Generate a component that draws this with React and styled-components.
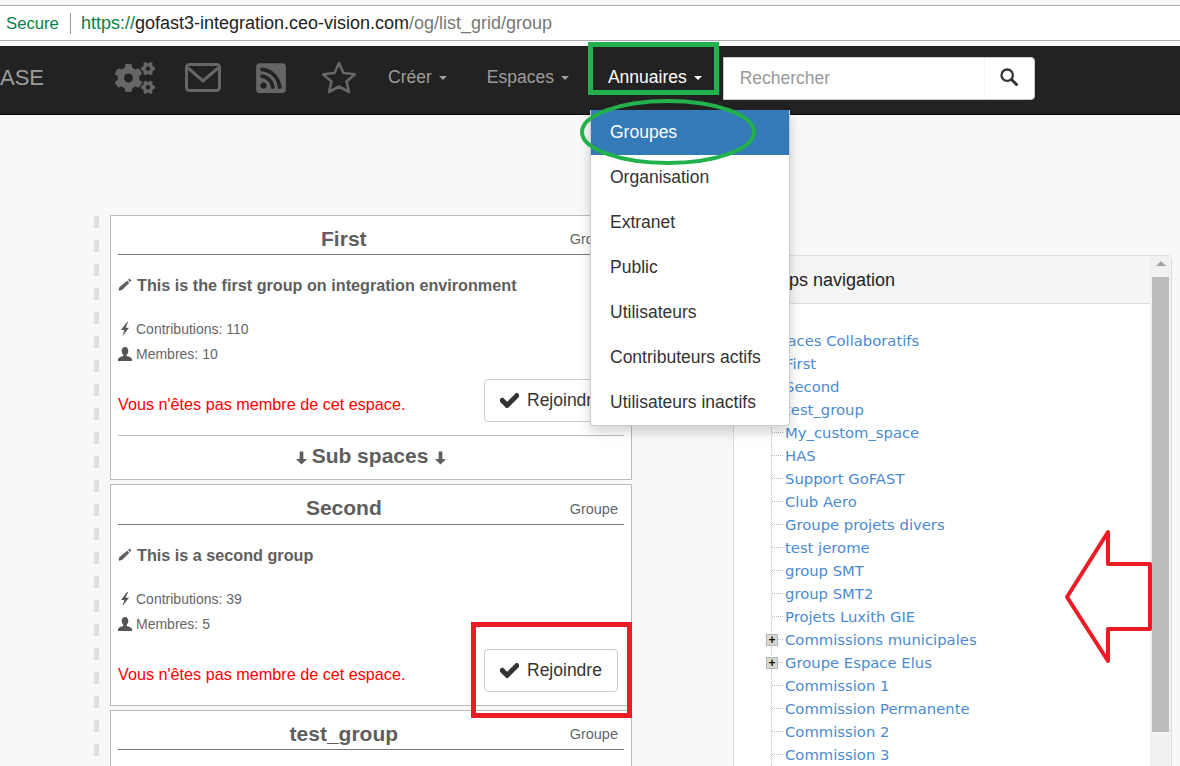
import React from 'react';
import styled, { createGlobalStyle } from 'styled-components';
import { FaCogs, FaRssSquare, FaCheck } from 'react-icons/fa';

const GlobalStyle = createGlobalStyle`
    html, body {
        margin: 0;
        height: 766px;
        overflow: hidden;
        background: #f8f8f8;
        font-family: 'Liberation Sans', Arial, sans-serif;
    }
    * { box-sizing: border-box; }
`;

const Page = styled.div`
    position: relative;
    width: 1180px;
    height: 766px;
    overflow: hidden;
`;

const AddressBar = styled.div`
    margin-top: 5px;
    height: 36px;
    background: #fff;
    border-top: 1px solid #aaa;
    border-bottom: 1px solid #aaa;
    display: flex;
    align-items: center;
    padding-left: 6px;
    font-size: 18px;
    color: #222;
`;

const Secure = styled.span`
    color: #0b8043;
    font-size: 16.7px;
    padding-right: 11px;
    border-right: 1px solid #999;
    line-height: 21px;
    margin-right: 10px;
`;

const Scheme = styled.span` color: #0b8043; `;
const Path = styled.span` color: #777; `;

const NavBar = styled.nav`
    margin-top: 5px;
    height: 69px;
    padding-bottom: 5px;
    background: #222;
    border-bottom: 1px solid #080808;
    display: flex;
    align-items: center;
    color: #9d9d9d;
    font-size: 17.5px;
`;

const Brand = styled.span`
    font-size: 22px;
    width: 115px;
`;

const IconLink = styled.span`
    display: flex;
    width: ${p => p.$width}px;
    color: #666;
    font-size: ${p => p.$size}px;
`;

const MenuItem = styled.span`
    position: relative;
    display: flex;
    align-items: center;
    margin-right: ${p => p.$gap}px;
    color: ${p => (p.$active ? '#fff' : '#9d9d9d')};
`;

const Caret = styled.i`
    margin-left: 7px;
    border-top: 4px solid currentColor;
    border-left: 4px solid transparent;
    border-right: 4px solid transparent;
`;

const SearchBox = styled.div`
    width: 312px;
    height: 43px;
    margin-top: 2px;
    display: flex;
    background: #fff;
    border: 1px solid #ccc;
    border-radius: 0 4px 4px 0;
    color: #999;
`;

const SearchInput = styled.div`
    flex: 1;
    display: flex;
    align-items: center;
    padding-left: 16px;
`;

const SearchButton = styled.div`
    width: 50px;
    display: flex;
    align-items: center;
    justify-content: center;
    border-left: 1px solid #f4f4f4;
    color: #333;
    padding-bottom: 3px;
`;

const Dropdown = styled.ul`
    position: absolute;
    left: 590px;
    top: 110px;
    width: 200px;
    height: 316px;
    margin: 0;
    padding: 0;
    list-style: none;
    background: #fff;
    border: 1px solid #ccc;
    border-top: none;
    border-radius: 0 0 4px 4px;
    box-shadow: 0 6px 12px rgba(0, 0, 0, 0.175);
    font-size: 17.5px;
    color: #333;
    z-index: 3;
`;

const DropdownItem = styled.li`
    height: 45px;
    padding-left: 19px;
    display: flex;
    align-items: center;
    background: ${p => (p.$active ? '#337ab7' : 'transparent')};
    color: ${p => (p.$active ? '#fff' : '#333')};
`;

const Main = styled.main`
    display: flex;
    align-items: flex-start;
    margin-top: 100px;
    padding-left: 94px;
`;

const DashedRail = styled.div`
    width: 5px;
    height: 560px;
    margin-top: 1px;
    margin-right: 11px;
    background: repeating-linear-gradient(#e0e0e0 0 12px, transparent 12px 24px);
`;

const CardColumn = styled.div`
    width: 522px;
    display: flex;
    flex-direction: column;
    gap: 4px;
    margin-right: 101px;
`;

const Card = styled.article`
    height: ${p => p.$height}px;
    background: #fff;
    border: 1px solid #bbb;
    padding: 0 7px;
    color: #5e5e5e;
`;

const CardHeader = styled.header`
    height: ${p => p.$height}px;
    display: flex;
    align-items: center;
    border-bottom: 1px solid #777;
    padding: 8px 6px 0 0;
`;

const CardTitle = styled.h2`
    flex: 1;
    margin: 0;
    padding-top: 7px;
    padding-bottom: 8px;
    text-align: center;
    font-size: 21px;
    font-weight: bold;
`;

const GroupTag = styled.span`
    font-size: 14.5px;
    color: #666;
`;

const Description = styled.p`
    margin: 19px 0 0;
    height: 22px;
    display: flex;
    align-items: center;
    gap: 5px;
    font-size: 16.2px;
    font-weight: bold;
`;

const Stats = styled.div`
    margin-top: 20px;
`;

const Stat = styled.div`
    height: 25px;
    display: flex;
    align-items: center;
    gap: 4px;
    font-size: 14px;
    color: #666;
    svg { color: #555; }
`;

const Footer = styled.div`
    margin-top: 13px;
    height: 43px;
    padding-right: 6px;
    display: flex;
    justify-content: space-between;
`;

const Warning = styled.span`
    align-self: flex-end;
    color: #f00;
    font-size: 16.2px;
    line-height: 18px;
    margin-bottom: 9px;
`;

const JoinButton = styled.button`
    width: 134px;
    height: 43px;
    display: flex;
    align-items: center;
    gap: 8px;
    padding: 0 0 0 15px;
    background: #fff;
    border: 1px solid #ccc;
    border-radius: 4px;
    color: #333;
    font: 17.5px 'Liberation Sans', Arial, sans-serif;
    svg {
        font-size: 19px;
        stroke: currentColor;
        stroke-width: 30;
    }
`;

const SubSpaces = styled.div`
    margin-top: 13px;
    border-top: 1px solid #bbb;
    height: 41px;
    display: flex;
    align-items: center;
    justify-content: center;
    gap: 5px;
    font-size: 21px;
    font-weight: bold;
    svg { margin-top: 4px; }
    svg:last-child { margin-left: 2px; }
`;

const TreePanel = styled.aside`
    position: relative;
    width: 439px;
    height: 520px;
    margin-top: 40px;
    padding-right: 21px;
    background: #fff;
    border: 1px solid #ddd;
    border-radius: 4px 4px 0 0;
`;

const PanelHeader = styled.div`
    height: 48px;
    padding: 1px 0 0 15px;
    display: flex;
    align-items: center;
    background: #f5f5f5;
    border-bottom: 1px solid #ddd;
    color: #222;
    font-size: 18px;
`;

const Scrollbar = styled.div`
    position: absolute;
    top: 0;
    right: 0;
    bottom: 0;
    width: 21px;
    padding: 5px 2px 0;
    background: #f1f1f1;
    display: flex;
    flex-direction: column;
    align-items: center;
`;

const ScrollArrow = styled.i`
    border-bottom: 5px solid #a3a3a3;
    border-left: 5px solid transparent;
    border-right: 5px solid transparent;
`;

const ScrollThumb = styled.div`
    width: 17px;
    height: 455px;
    margin-top: 11px;
    background: #bcbcbc;
`;

const Tree = styled.div`
    padding-top: 25px;
    font-family: 'DejaVu Sans', Verdana, sans-serif;
    font-size: 14.8px;
    color: #4a8bd0;
`;

const TreeRoot = styled.div`
    height: 23px;
    line-height: 24px;
    padding-left: 27px;
`;

const TreeList = styled.div`
    margin-left: 37px;
    border-left: 1px dotted #bbb;
`;

const TreeRow = styled.div`
    position: relative;
    height: 23px;
    display: flex;
    align-items: center;
`;

const Connector = styled.i`
    width: 11px;
    margin-right: 2px;
    border-top: 1px dotted #bbb;
`;

const Expander = styled.b`
    position: absolute;
    left: -6px;
    top: 6px;
    width: 12px;
    height: 12px;
    display: flex;
    align-items: center;
    justify-content: center;
    background: #d8d8cc;
    border: 1px solid #a9b8c6;
    color: #111;
    font: bold 12px/1 'Liberation Sans', sans-serif;
`;

// screenshot annotations, drawn over the page
const GreenBox = styled.div`
    position: absolute;
    left: 588px;
    top: 42px;
    width: 131px;
    height: 53px;
    border: 5px solid #22b14c;
    z-index: 4;
`;

const RedBox = styled.div`
    position: absolute;
    left: 471px;
    top: 622px;
    width: 161px;
    height: 96px;
    border: 5px solid #ed1c24;
    z-index: 4;
`;

const Markup = styled.svg`
    position: absolute;
    left: 0;
    top: 0;
    z-index: 4;
    pointer-events: none;
`;

const EnvelopeIcon = () => (
    <svg width="36" height="29" viewBox="0 0 36 29" fill="none" stroke="currentColor" strokeWidth="3">
        <rect x="1.5" y="1.5" width="33" height="26" rx="3" />
        <path d="M3 5 L18 18 L33 5" />
    </svg>
);

const StarIcon = () => (
    <svg width="34" height="33" viewBox="0 0 34 33" fill="none" stroke="currentColor" strokeWidth="2.6" strokeLinejoin="round">
        <polygon points="17,2 21.5,12 33,13.3 24.5,20.5 27,31 17,25.5 7,31 9.5,20.5 1,13.3 12.5,12" />
    </svg>
);

const SearchIcon = () => (
    <svg width="18" height="18" viewBox="0 0 18 18" fill="none" stroke="currentColor">
        <circle cx="7.2" cy="7.2" r="5.7" strokeWidth="2.3" />
        <path d="M11.5 11.5 L16.5 16.5" strokeWidth="3" strokeLinecap="round" />
    </svg>
);

const PencilIcon = () => (
    <svg width="14" height="14" viewBox="0 0 14 14" fill="currentColor">
        <path d="M11.4.6l2 2-1.3 1.3-2-2z M9.3 2.7l2 2-7 7-3 1.1-.8-.9 1-3z" />
    </svg>
);

const BoltIcon = () => (
    <svg width="14" height="14" viewBox="0 0 14 14" fill="currentColor">
        <path d="M9 0L3 8h3.4L4.5 14 11 5.8H7.6L10 0z" />
    </svg>
);

const BustIcon = () => (
    <svg width="14" height="14" viewBox="0 0 14 14" fill="currentColor">
        <path d="M7 0c2.2 0 3.3 1.8 3.3 4 0 1.6-.7 3-1.6 3.8v1.2c2 .6 5.3 1.5 5.3 3.5V14H0v-1.5c0-2 3.3-2.9 5.3-3.5V7.8C4.4 7 3.7 5.6 3.7 4 3.7 1.8 4.8 0 7 0z" />
    </svg>
);

const DownArrow = () => (
    <svg width="11" height="14" viewBox="0 0 12 14" fill="currentColor">
        <path d="M4 0h4v8h4l-6 6-6-6h4z" />
    </svg>
);

const menuItems = ['Groupes', 'Organisation', 'Extranet', 'Public', 'Utilisateurs', 'Contributeurs actifs', 'Utilisateurs inactifs'];

const treeItems = [
    'First', 'Second', 'test_group', 'My_custom_space', 'HAS', 'Support GoFAST', 'Club Aero',
    'Groupe projets divers', 'test jerome', 'group SMT', 'group SMT2', 'Projets Luxith GIE',
    'Commissions municipales', 'Groupe Espace Elus', 'Commission 1', 'Commission Permanente',
    'Commission 2', 'Commission 3',
];

const expandable = ['Commissions municipales', 'Groupe Espace Elus'];

const GroupCard = ({ title, description, contributions, members, height, headerHeight = 39, children }) => (
    <Card $height={height}>
        <CardHeader $height={headerHeight}>
            <CardTitle>{title}</CardTitle>
            <GroupTag>Groupe</GroupTag>
        </CardHeader>
        {description && (
            <>
                <Description><PencilIcon /> {description}</Description>
                <Stats>
                    <Stat><BoltIcon /> Contributions: {contributions}</Stat>
                    <Stat><BustIcon /> Membres: {members}</Stat>
                </Stats>
                <Footer>
                    <Warning>Vous n'êtes pas membre de cet espace.</Warning>
                    <JoinButton><FaCheck /> Rejoindre</JoinButton>
                </Footer>
            </>
        )}
        {children}
    </Card>
);

const App = () => (
    <Page>
        <GlobalStyle />
        <AddressBar>
            <Secure>Secure</Secure>
            <Scheme>https://</Scheme>gofast3-integration.ceo-vision.com<Path>/og/list_grid/group</Path>
        </AddressBar>
        <NavBar>
            <Brand>ASE</Brand>
            <IconLink $width={70} $size={40}><FaCogs /></IconLink>
            <IconLink $width={69}><EnvelopeIcon /></IconLink>
            <IconLink $width={68} $size={34}><FaRssSquare /></IconLink>
            <IconLink $width={66}><StarIcon /></IconLink>
            <MenuItem $gap={40}>Créer <Caret /></MenuItem>
            <MenuItem $gap={39}>Espaces <Caret /></MenuItem>
            <MenuItem $gap={21} $active>Annuaires <Caret /></MenuItem>
            <SearchBox>
                <SearchInput>Rechercher</SearchInput>
                <SearchButton><SearchIcon /></SearchButton>
            </SearchBox>
        </NavBar>
        <Dropdown>
            {menuItems.map((item, i) => (
                <DropdownItem key={item} $active={i === 0}>{item}</DropdownItem>
            ))}
        </Dropdown>
        <Main>
            <DashedRail />
            <CardColumn>
                <GroupCard title="First" description="This is the first group on integration environment" contributions={110} members={10} height={265}>
                    <SubSpaces><DownArrow /> Sub spaces <DownArrow /></SubSpaces>
                </GroupCard>
                <GroupCard title="Second" description="This is a second group" contributions={39} members={5} height={222} headerHeight={40} />
                <GroupCard title="test_group" height={120} />
            </CardColumn>
            <TreePanel>
                <PanelHeader>Groups navigation</PanelHeader>
                <Tree>
                    <TreeRoot>Espaces Collaboratifs</TreeRoot>
                    <TreeList>
                        {treeItems.map(item => (
                            <TreeRow key={item}>
                                {expandable.includes(item) && <Expander>+</Expander>}
                                <Connector />
                                {item}
                            </TreeRow>
                        ))}
                    </TreeList>
                </Tree>
                <Scrollbar>
                    <ScrollArrow />
                    <ScrollThumb />
                </Scrollbar>
            </TreePanel>
        </Main>
        <GreenBox />
        <RedBox />
        <Markup width="1180" height="766" fill="none">
            <ellipse cx="668" cy="132" rx="86" ry="31" stroke="#22b14c" strokeWidth="4" />
            <path d="M1108 532 L1067 597 L1108 661 V629 H1150 V564 H1108 Z" stroke="#ed1c24" strokeWidth="4" strokeLinejoin="round" />
        </Markup>
    </Page>
);

export default App;
